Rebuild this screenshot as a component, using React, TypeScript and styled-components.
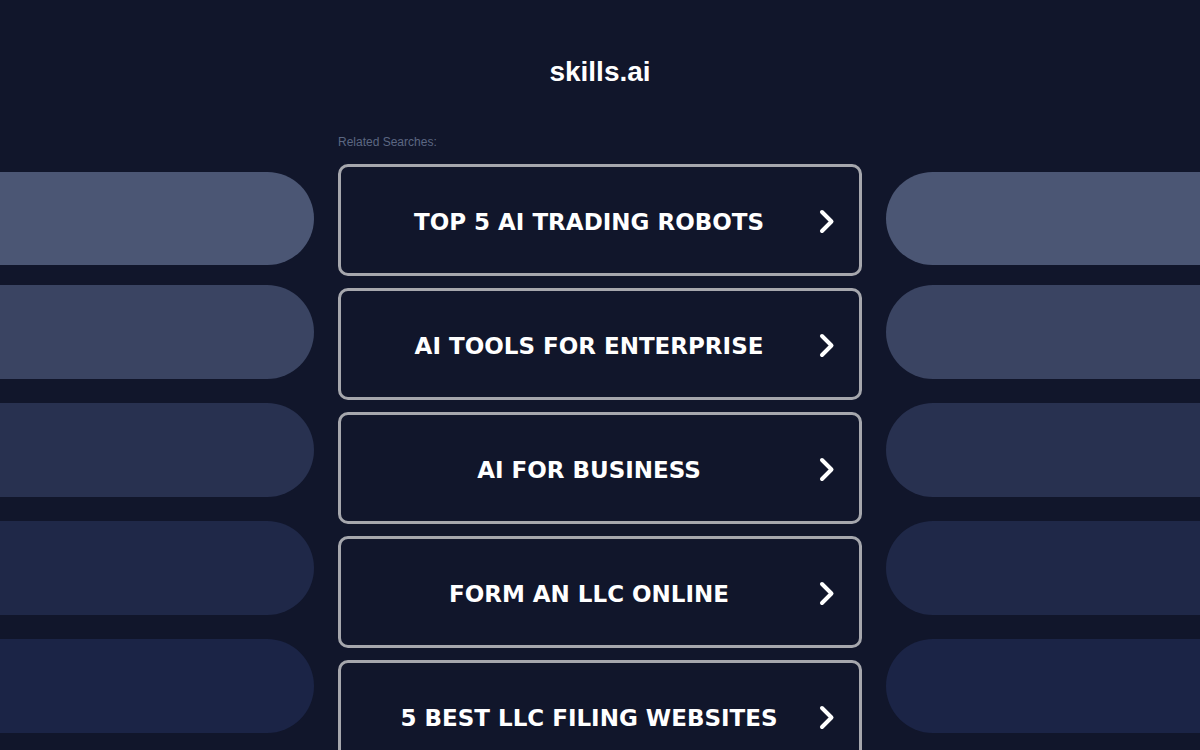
import React from "react";
import styled, { createGlobalStyle } from "styled-components";

const GlobalStyle = createGlobalStyle`
  html, body {
    margin: 0;
    padding: 0;
    background: #11162b;
    overflow: hidden;
  }
`;

const links = [
  "TOP 5 AI TRADING ROBOTS",
  "AI TOOLS FOR ENTERPRISE",
  "AI FOR BUSINESS",
  "FORM AN LLC ONLINE",
  "5 BEST LLC FILING WEBSITES",
];

const pillColors = ["#4b5674", "#3a4462", "#283150", "#1f2848", "#1b2446"];

const Page = styled.div`
  width: 1200px;
  height: 750px;
  overflow: hidden;
  display: grid;
  grid-template-columns: 1fr 524px 1fr;
  column-gap: 24px;
  background: #11162b;
`;

const SideColumn = styled.div`
  display: flex;
  flex-direction: column;
  gap: 24px;
  padding-top: 172px;
`;

const Pill = styled.div<{ color: string; side: "left" | "right" }>`
  height: 94px;
  flex-shrink: 0;
  background: ${(props) => props.color};
  border-radius: ${(props) =>
    props.side === "left" ? "0 47px 47px 0" : "47px 0 0 47px"};

  &:first-child {
    height: 93px;
    margin-bottom: -4px;
  }
`;

const Center = styled.main`
  display: flex;
  flex-direction: column;
`;

const Title = styled.h1`
  margin: 0;
  padding-top: 54px;
  height: 38px;
  text-align: center;
  font-family: "Liberation Sans", Arial, sans-serif;
  font-weight: 700;
  font-size: 28px;
  line-height: 36px;
  color: #ffffff;
`;

const Label = styled.div`
  margin-top: 42px;
  font-family: "Liberation Sans", Arial, sans-serif;
  font-size: 12px;
  line-height: 16px;
  color: #5c6782;
`;

const Cards = styled.div`
  margin-top: 14px;
  display: flex;
  flex-direction: column;
  gap: 12px;
`;

const Card = styled.a`
  box-sizing: border-box;
  height: 112px;
  flex-shrink: 0;
  display: flex;
  align-items: center;
  padding: 4px 24px 0;
  border: 3px solid #a6a7ad;
  border-radius: 10px;
  text-decoration: none;
  cursor: pointer;
`;

const CardText = styled.span`
  flex: 1;
  text-align: center;
  font-family: "DejaVu Sans", Verdana, sans-serif;
  font-weight: 700;
  font-size: 23px;
  color: #ffffff;
`;

const Chevron = () => (
  <svg width="22" height="26" viewBox="0 0 22 26" fill="none">
    <path
      d="M9 3 L18.5 12.5 L9 22"
      stroke="#ffffff"
      strokeWidth="4"
      strokeLinecap="round"
      strokeLinejoin="round"
    />
  </svg>
);

export default function App() {
  return (
    <>
      <GlobalStyle />
      <Page>
        <SideColumn>
          {pillColors.map((c) => (
            <Pill key={c} color={c} side="left" />
          ))}
        </SideColumn>
        <Center>
          <Title>skills.ai</Title>
          <Label>Related Searches:</Label>
          <Cards>
            {links.map((l) => (
              <Card key={l}>
                <CardText>{l}</CardText>
                <Chevron />
              </Card>
            ))}
          </Cards>
        </Center>
        <SideColumn>
          {pillColors.map((c) => (
            <Pill key={c} color={c} side="right" />
          ))}
        </SideColumn>
      </Page>
    </>
  );
}
